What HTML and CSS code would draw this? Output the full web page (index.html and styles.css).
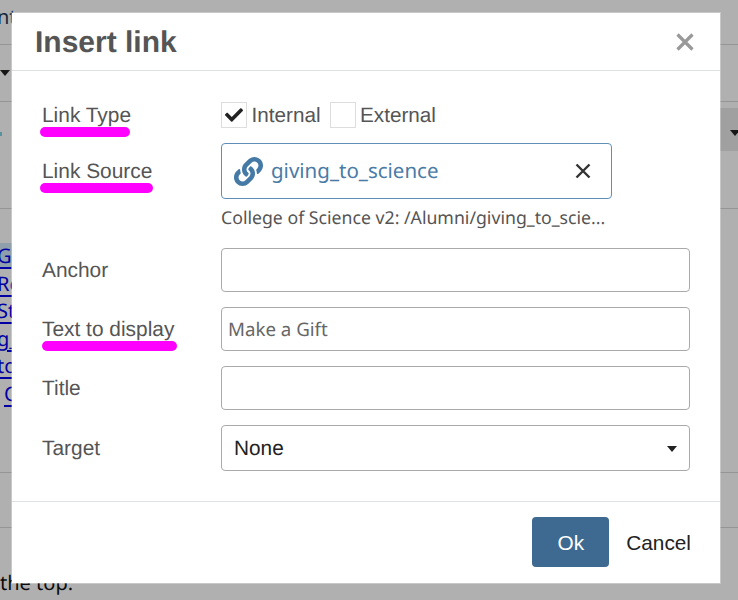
FILE: index.html
```html
<!DOCTYPE html>
<html lang="en">
<head>
    <meta charset="UTF-8">
    <meta name="viewport" content="width=device-width, initial-scale=1.0">
    <title>Insert link</title>
    <link rel="stylesheet" href="styles.css">
</head>
<body>
    <!-- Page behind the dialog -->
    <div class="page">
        <div class="page-row row-top"><span class="page-text cut">nt</span></div>
        <div class="page-row row-tools"><span class="caret"></span></div>
        <div class="page-row row-toolbar">
            <span class="dot"></span>
            <div class="dropdown"><span class="caret"></span></div>
        </div>
        <div class="page-row row-links">
            <a class="link selected" href="#">G</a>
            <a class="link" href="#">Re</a>
            <a class="link" href="#">St</a>
            <a class="link" href="#">g_</a>
            <a class="link" href="#">to</a>
            <a class="link indent" href="#">C</a>
        </div>
        <div class="page-row row-blank"></div>
        <div class="page-row row-end"><span class="page-text">the top.</span></div>
    </div>
    <div class="backdrop"></div>

    <div class="modal">
        <div class="modal-header">
            <h1>Insert link</h1>
            <svg class="close" viewBox="0 0 18 18"><path d="M1.5 1.5l15 15M16.500 1.500l-15 15"/></svg>
        </div>

        <div class="modal-body">
            <div class="form-row">
                <label class="marked">Link Type<span class="marker"></span></label>
                <div class="choices">
                    <span class="checkbox">
                        <svg viewBox="0 0 512 512"><path d="M173.898 439.404l-166.4-166.4c-9.997-9.997-9.997-26.206 0-36.204l36.203-36.204c9.997-9.998 26.207-9.998 36.204 0L192 312.69 432.095 72.596c9.997-9.997 26.207-9.997 36.204 0l36.203 36.204c9.997 9.997 9.997 26.206 0 36.204l-294.4 294.401c-9.998 9.997-26.207 9.997-36.204-.001z"/></svg>
                    </span>
                    <span class="choice">Internal</span>
                    <span class="checkbox"></span>
                    <span class="choice">External</span>
                </div>
            </div>

            <div class="form-row source-row">
                <label class="marked">Link Source<span class="marker marker-source"></span></label>
                <div class="source">
                    <svg class="link-icon" viewBox="0 0 512 512"><path d="M326.612 185.391c59.747 59.809 58.927 155.698.36 214.59-.11.12-.24.25-.36.37l-67.2 67.2c-59.27 59.27-155.699 59.262-214.96 0-59.27-59.26-59.27-155.7 0-214.96l37.106-37.106c9.84-9.84 26.786-3.3 27.294 10.606.648 17.722 3.826 35.527 9.69 52.721 1.986 5.822.567 12.262-3.783 16.612l-13.087 13.087c-28.026 28.026-28.905 73.66-1.155 101.96 28.024 28.579 74.086 28.749 102.325.51l67.2-67.19c28.191-28.191 28.073-73.757 0-101.83-3.701-3.694-7.429-6.564-10.341-8.569a16.037 16.037 0 0 1-6.947-12.606c-.396-10.567 3.348-21.456 11.698-29.806l21.054-21.055c5.521-5.521 14.182-6.199 20.584-1.731a152.482 152.482 0 0 1 20.522 17.197zM467.547 44.449c-59.261-59.262-155.69-59.27-214.96 0l-67.2 67.2c-.12.12-.25.25-.36.37-58.566 58.892-59.387 154.781.36 214.59a152.454 152.454 0 0 0 20.521 17.196c6.402 4.468 15.064 3.789 20.584-1.731l21.054-21.055c8.35-8.35 12.094-19.239 11.698-29.806a16.037 16.037 0 0 0-6.947-12.606c-2.912-2.005-6.64-4.875-10.341-8.569-28.073-28.073-28.191-73.639 0-101.83l67.2-67.19c28.239-28.239 74.3-28.069 102.325.51 27.75 28.3 26.872 73.934-1.155 101.96l-13.087 13.087c-4.35 4.35-5.769 10.79-3.783 16.612 5.864 17.194 9.042 34.999 9.69 52.721.509 13.906 17.454 20.446 27.294 10.606l37.106-37.106c59.271-59.259 59.271-155.699.001-214.959z"/></svg>
                    <span class="source-name">giving_to_science</span>
                    <svg class="clear" viewBox="0 0 16 16"><path d="M1.500 1.500l13 13M14.500 1.500l-13 13"/></svg>
                </div>
            </div>
            <div class="hint">College of Science v2: /Alumni/giving_to_scie...</div>

            <div class="form-row">
                <label>Anchor</label>
                <div class="field"></div>
            </div>
            <div class="form-row">
                <label class="marked">Text to display<span class="marker marker-text"></span></label>
                <div class="field">Make a Gift</div>
            </div>
            <div class="form-row">
                <label>Title</label>
                <div class="field"></div>
            </div>
            <div class="form-row last">
                <label>Target</label>
                <div class="field select">None<span class="caret"></span></div>
            </div>
        </div>

        <div class="modal-footer">
            <button class="btn btn-primary">Ok</button>
            <button class="btn btn-cancel">Cancel</button>
        </div>
    </div>
</body>
</html>
```

FILE: styles.css
```css
html, body {
    margin: 0;
    height: 600px;
    overflow: hidden;
}
body {
    position: relative;
    background: white;
    font-family: "Liberation Sans", Arial, sans-serif;
    text-rendering: geometricPrecision;
}

/* page behind the dialog */
.page {
    height: 600px;
    font-family: "Noto Sans", sans-serif;
    font-size: 20px;
    color: #111;
}
.page-row {
    border-bottom: 1px solid #d8d8d8;
    box-sizing: border-box;
}
.row-top {
    height: 45px;
    padding-top: 5px;
}
.row-tools {
    height: 57px;
    padding-top: 25px;
}
.row-toolbar {
    height: 107px;
    padding-top: 6px;
    display: flex;
    justify-content: space-between;
}
.row-links {
    height: 264px;
    padding-top: 34px;
    display: flex;
    flex-direction: column;
    align-items: flex-start;
}
.row-blank {
    height: 55px;
}
.row-end {
    border-bottom: none;
    padding-top: 43px;
}
.page-text {
    display: block;
    line-height: 24px;
}
.cut {
    color: #1c3b5c;
    margin-left: -3px;
}
.dot {
    width: 2px;
    height: 4px;
    margin-top: 24px;
    background: #7fd4e4;
}
.dropdown {
    width: 18px;
    height: 43px;
    background: #e8e8e8;
    padding: 22px 0 0 10px;
    box-sizing: border-box;
}
.caret {
    display: block;
    width: 0;
    height: 0;
    border-left: 5.500px solid transparent;
    border-right: 5.500px solid transparent;
    border-top: 6px solid #222;
}
.link {
    height: 27.600px;
    line-height: 26px;
    margin-left: -3px;
    padding-right: 30px;
    color: #0000ee;
    text-decoration: underline;
    text-underline-offset: 4px;
}
.selected {
    background: #cfe8fa;
    height: 24px;
    margin-bottom: 3.600px;
}
.indent {
    padding-left: 7px;
}
.backdrop {
    position: absolute;
    inset: 0;
    background: rgba(0, 0, 0, 0.31);
}

/* dialog */
.modal {
    position: absolute;
    left: 12px;
    top: 13px;
    width: 708px;
    height: 570px;
    background: white;
    box-shadow: 0 0 0 1px rgba(255, 255, 255, 0.3);
    color: #555;
    font-size: 20.900px;
}
.modal-header {
    height: 58px;
    box-sizing: border-box;
    border-bottom: 1px solid #dee2e6;
    display: flex;
    align-items: center;
    justify-content: space-between;
    padding: 0 26px 0 23px;
}
.modal-header h1 {
    margin: 0;
    padding-top: 2px;
    font-size: 30px;
    font-weight: bold;
    color: #555;
}
.close {
    width: 18px;
    height: 18px;
}
.close path {
    fill: none;
    stroke: #999;
    stroke-width: 3.200;
}
.modal-body {
    padding: 31px 30px 30px 30px;
}
.form-row {
    display: flex;
    align-items: center;
    margin-bottom: 15px;
}
.form-row.last {
    margin-bottom: 0;
}
.form-row label {
    width: 179px;
    flex-shrink: 0;
    padding-top: 2px;
}
.marked {
    position: relative;
}
.marker {
    position: absolute;
    left: -2px;
    top: 25px;
    width: 90px;
    height: 10px;
    border-radius: 5px;
    background: #ff00ff;
}
.marker-source {
    width: 113px;
}
.marker-text {
    left: 0;
    width: 135px;
    top: 24.500px;
}
.choices {
    display: flex;
    align-items: center;
}
.checkbox {
    width: 26px;
    height: 26px;
    box-sizing: border-box;
    border: 1px solid #ddd;
    display: flex;
    align-items: center;
    justify-content: center;
}
.checkbox svg {
    width: 18px;
    height: 18px;
    fill: #222;
}
.choice {
    margin: 0 9px 0 4.500px;
    padding-top: 1px;
    font-size: 20.700px;
}
.source-row {
    margin-bottom: 9px;
}
.source {
    width: 391px;
    height: 56px;
    box-sizing: border-box;
    border: 1px solid #5f8fb9;
    border-radius: 4px;
    display: flex;
    align-items: center;
    padding: 0 20px 0 12px;
}
.link-icon {
    width: 29px;
    height: 29px;
    fill: #457aa6;
}
.source-name {
    flex: 1;
    margin-left: 8px;
    font-family: "Noto Sans", sans-serif;
    font-size: 20.500px;
    color: #4a7ba6;
}
.clear {
    width: 16px;
    height: 16px;
}
.clear path {
    fill: none;
    stroke: #333;
    stroke-width: 2.400;
}
.hint {
    margin: 0 0 20px 179px;
    height: 20px;
    line-height: 20px;
    font-family: "Noto Sans", sans-serif;
    font-size: 17.700px;
    color: #555;
    white-space: nowrap;
}
.field {
    width: 469px;
    height: 44px;
    box-sizing: border-box;
    border: 1px solid #aaa;
    border-radius: 4px;
    padding: 0 6px;
    display: flex;
    align-items: center;
    font-family: "Noto Sans", sans-serif;
    font-size: 18.700px;
    color: #666;
}
.select {
    height: 46px;
    padding: 1px 12px 0 12px;
    justify-content: space-between;
    font-family: "Liberation Sans", Arial, sans-serif;
    font-size: 20.800px;
    color: #222;
}
.modal-footer {
    border-top: 1px solid #dee2e6;
    height: 82px;
    box-sizing: border-box;
    display: flex;
    justify-content: flex-end;
    align-items: flex-start;
    padding: 15px 12px 0 0;
}
.btn {
    height: 50px;
    border: none;
    border-radius: 4px;
    background: none;
    font-family: "Liberation Sans", Arial, sans-serif;
    font-size: 20.800px;
    padding: 2px 0 0 0;
}
.btn-primary {
    width: 77px;
    background: #3e6990;
    color: white;
}
.btn-cancel {
    padding: 2px 17px 0 17px;
    color: #222;
}
```
